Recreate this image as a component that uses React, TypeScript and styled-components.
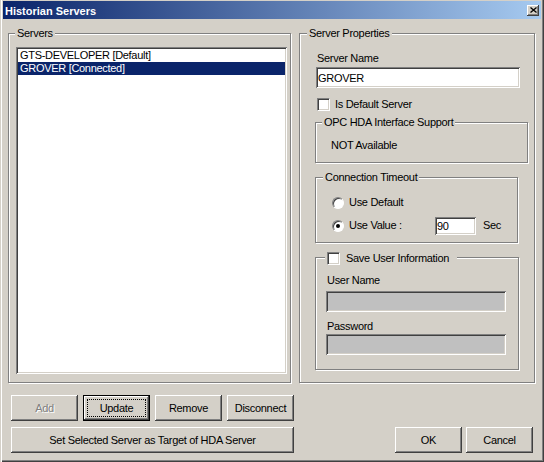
import React from 'react';
import styled, { createGlobalStyle, css } from 'styled-components';

const GlobalStyle = createGlobalStyle`
  html, body {
    margin: 0;
    padding: 0;
    background: #d4d0c8;
  }
  body {
    font-family: "Liberation Sans", Arial, sans-serif;
    font-size: 11px;
    letter-spacing: -0.3px;
    color: #000;
  }
`;

const Window = styled.div`
  width: 544px;
  height: 462px;
  box-sizing: border-box;
  overflow: hidden;
  background: #d4d0c8;
  padding: 1px 3px 3px 3px;
  display: flex;
  flex-direction: column;
  box-shadow: inset 1px 0 0 #d4d0c8, inset 2px 0 0 #fff,
    inset -1px -1px 0 #404040, inset -2px -2px 0 #808080;
`;

const TitleBar = styled.div`
  height: 18px;
  flex: none;
  display: flex;
  align-items: center;
  justify-content: space-between;
  padding: 0 2px;
  background: linear-gradient(to right, #0a246a, #a6caf0);
`;

const Title = styled.span`
  color: #fff;
  font-weight: bold;
  letter-spacing: 0;
  padding-top: 1px;
`;

const CloseButton = styled.button`
  width: 12px;
  height: 11px;
  padding: 0;
  border: none;
  background: #d4d0c8;
  display: flex;
  align-items: center;
  justify-content: center;
  box-shadow: inset -1px -1px 0 #404040, inset 1px 1px 0 #fff,
    inset -2px -2px 0 #808080;
`;

const Body = styled.div`
  flex: 1;
  display: flex;
  flex-direction: column;
  padding: 8px 6px 0 5px;
`;

const Panels = styled.div`
  display: grid;
  grid-template-columns: 283px 236px;
  column-gap: 8px;
  height: 356px;
`;

const GroupBox = styled.fieldset<{ $width?: number; $height?: number }>`
  margin: 0;
  padding: 0;
  min-width: 0;
  box-sizing: border-box;
  border: 1px solid #808080;
  box-shadow: inset 1px 1px 0 #fff, 1px 1px 0 #fff;
  ${(p) => p.$width && `width: ${p.$width}px;`}
  ${(p) => (p.$height ? `height: ${p.$height}px;` : 'height: 100%;')}
`;

const Legend = styled.legend<{ $offset?: number }>`
  margin-left: ${(p) => p.$offset ?? 6}px;
  padding: 0 2px;
  line-height: 13px;
  background: #d4d0c8;
`;

const CheckLegend = styled(Legend)`
  display: flex;
  align-items: flex-end;
  gap: 6px;
  height: 15px;
  padding-right: 8px;
`;

const ServersBody = styled.div`
  padding: 7px 0 0 7px;
`;

const ListBox = styled.div`
  width: 271px;
  height: 327px;
  box-sizing: border-box;
  padding: 2px;
  background: #fff;
  box-shadow: inset 1px 1px 0 #808080, inset -1px -1px 0 #fff,
    inset 2px 2px 0 #404040, inset -2px -2px 0 #d4d0c8;
`;

const ListItem = styled.div<{ $selected?: boolean }>`
  line-height: 13px;
  padding-left: 2px;
  white-space: nowrap;
  ${(p) =>
    p.$selected &&
    css`
      background: #0a246a;
      color: #fff;
    `}
`;

const PropsBody = styled.div`
  padding: 12px 0 0 16px;
  display: flex;
  flex-direction: column;
  align-items: flex-start;
`;

const FieldLabel = styled.span<{ $gap?: number }>`
  display: block;
  line-height: 13px;
  padding-left: 1px;
  margin-top: ${(p) => p.$gap ?? 0}px;
`;

const TextInput = styled.input<{ $width: number; $height?: number; $gap?: number }>`
  width: ${(p) => p.$width}px;
  height: ${(p) => p.$height ?? 21}px;
  margin: ${(p) => p.$gap ?? 0}px 0 0 0;
  box-sizing: border-box;
  padding: 0 2px;
  border: none;
  outline: none;
  font: inherit;
  letter-spacing: inherit;
  color: #000;
  background: #fff;
  box-shadow: inset 1px 1px 0 #808080, inset -1px -1px 0 #fff,
    inset 2px 2px 0 #404040, inset -2px -2px 0 #d4d0c8;
  &:disabled {
    background: #c0c0c0;
  }
`;

const CheckRow = styled.label`
  display: flex;
  align-items: center;
  gap: 5px;
  line-height: 13px;
  margin: 10px 0 0 1px;
`;

const CheckBox = styled.span`
  display: block;
  flex: none;
  width: 13px;
  height: 13px;
  box-sizing: border-box;
  background: #fff;
  border: 1px solid;
  border-color: #808080 #fff #fff #808080;
  box-shadow: inset 1px 1px 0 #404040, inset -1px -1px 0 #d4d0c8;
`;

const SubGroup = styled(GroupBox)<{ $gap: number }>`
  margin: ${(p) => p.$gap}px 0 0 -1px;
`;

const OpcBody = styled.div`
  padding: 10px 0 0 15px;
  line-height: 13px;
`;

const TimeoutBody = styled.div`
  padding: 12px 0 0 16px;
  display: flex;
  flex-direction: column;
  gap: 10px;
`;

const RadioRow = styled.div`
  display: flex;
  align-items: center;
  height: 13px;
  gap: 5px;
`;

const Radio = styled.span<{ $checked?: boolean }>`
  position: relative;
  flex: none;
  width: 12px;
  height: 12px;
  box-sizing: border-box;
  border-radius: 50%;
  background: #fff;
  border: 1px solid;
  border-color: #808080 #fff #fff #808080;
  box-shadow: inset 1px 1px 0 #404040;
  ${(p) =>
    p.$checked &&
    css`
      &::after {
        content: '';
        position: absolute;
        left: 3px;
        top: 3px;
        width: 4px;
        height: 4px;
        border-radius: 50%;
        background: #000;
      }
    `}
`;

const RadioText = styled.span<{ $width?: number }>`
  line-height: 13px;
  ${(p) => p.$width && `width: ${p.$width}px;`}
`;

const Unit = styled.span`
  margin: -2px 0 0 2px;
`;

const UserBody = styled.div`
  padding: 9px 0 0 10px;
`;

const Footer = styled.div`
  display: flex;
  justify-content: space-between;
  align-items: flex-end;
  margin-top: 12px;
  padding: 0 2px 0 3px;
`;

const ButtonStack = styled.div`
  display: flex;
  flex-direction: column;
  gap: 6px;
`;

const ButtonRow = styled.div`
  display: flex;
  gap: 5px;
`;

const DialogButtons = styled.div`
  display: flex;
  gap: 4px;
`;

const Button = styled.button<{ $width: number; $focused?: boolean }>`
  position: relative;
  width: ${(p) => p.$width}px;
  height: 26px;
  box-sizing: border-box;
  padding: 0;
  border: none;
  background: #d4d0c8;
  font: inherit;
  letter-spacing: inherit;
  color: #000;
  box-shadow: inset -1px -1px 0 #404040, inset 1px 1px 0 #fff,
    inset -2px -2px 0 #808080, inset 2px 2px 0 #d4d0c8;
  &:disabled {
    color: #808080;
    text-shadow: 1px 1px 0 #fff;
  }
  ${(p) =>
    p.$focused &&
    css`
      border: 1px solid #000;
      box-shadow: inset -1px -1px 0 #404040, inset 1px 1px 0 #fff,
        inset -2px -2px 0 #808080;
      &::after {
        content: '';
        position: absolute;
        inset: 3px;
        border: 1px dotted #000;
      }
    `}
`;

export default function App() {
  return (
    <>
      <GlobalStyle />
      <Window>
        <TitleBar>
          <Title>Historian Servers</Title>
          <CloseButton aria-label="Close">
            <svg width="7" height="6" viewBox="0 0 7 6">
              <path d="M0.5 0.5 L6.5 5.5 M6.5 0.5 L0.5 5.5" stroke="#000" strokeWidth="1.3" fill="none" />
            </svg>
          </CloseButton>
        </TitleBar>
        <Body>
          <Panels>
            <GroupBox>
              <Legend>Servers</Legend>
              <ServersBody>
                <ListBox>
                  <ListItem>GTS-DEVELOPER [Default]</ListItem>
                  <ListItem $selected>GROVER [Connected]</ListItem>
                </ListBox>
              </ServersBody>
            </GroupBox>
            <GroupBox>
              <Legend $offset={7}>Server Properties</Legend>
              <PropsBody>
                <FieldLabel>Server Name</FieldLabel>
                <TextInput $width={204} $gap={2} defaultValue="GROVER" />
                <CheckRow>
                  <CheckBox />
                  <span>Is Default Server</span>
                </CheckRow>
                <SubGroup $gap={5} $width={213} $height={47}>
                  <Legend>OPC HDA Interface Support</Legend>
                  <OpcBody>NOT Available</OpcBody>
                </SubGroup>
                <SubGroup $gap={8} $width={203} $height={72}>
                  <Legend $offset={7}>Connection Timeout</Legend>
                  <TimeoutBody>
                    <RadioRow>
                      <Radio />
                      <RadioText>Use Default</RadioText>
                    </RadioRow>
                    <RadioRow>
                      <Radio $checked />
                      <RadioText $width={81}>Use Value :</RadioText>
                      <TextInput $width={41} $height={18} defaultValue="90" />
                      <Unit>Sec</Unit>
                    </RadioRow>
                  </TimeoutBody>
                </SubGroup>
                <SubGroup $gap={7} $width={204} $height={120}>
                  <CheckLegend $offset={9}>
                    <CheckBox />
                    <span>Save User Information</span>
                  </CheckLegend>
                  <UserBody>
                    <FieldLabel>User Name</FieldLabel>
                    <TextInput $width={180} $gap={4} disabled />
                    <FieldLabel $gap={8}>Password</FieldLabel>
                    <TextInput $width={180} $gap={1} disabled />
                  </UserBody>
                </SubGroup>
              </PropsBody>
            </GroupBox>
          </Panels>
          <Footer>
            <ButtonStack>
              <ButtonRow>
                <Button $width={67} disabled>Add</Button>
                <Button $width={67} $focused>Update</Button>
                <Button $width={67}>Remove</Button>
                <Button $width={67}>Disconnect</Button>
              </ButtonRow>
              <Button $width={283}>Set Selected Server as Target of HDA Server</Button>
            </ButtonStack>
            <DialogButtons>
              <Button $width={67}>OK</Button>
              <Button $width={67}>Cancel</Button>
            </DialogButtons>
          </Footer>
        </Body>
      </Window>
    </>
  );
}
